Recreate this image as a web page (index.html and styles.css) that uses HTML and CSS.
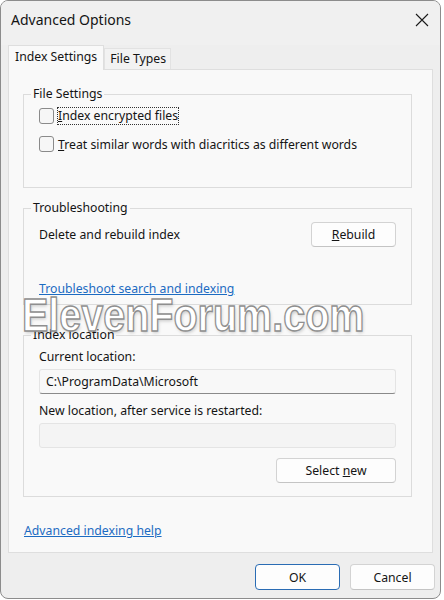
FILE: index.html
```html
<!DOCTYPE html>
<html lang="en">

<head>
    <meta charset="UTF-8">
    <meta name="viewport" content="width=device-width, initial-scale=1.0">
    <title>Advanced Options</title>
    <link rel="stylesheet" href="styles.css">
</head>

<body>

    <div class="window">

        <!-- Title bar -->
        <div class="titlebar">
            <span class="title">Advanced Options</span>
            <button class="close" aria-label="Close">
                <svg width="14" height="14" viewBox="0 0 14 14">
                    <path d="M1 1 L13 13 M13 1 L1 13" stroke="#1a1a1a" stroke-width="1.1" fill="none" />
                </svg>
            </button>
        </div>

        <!-- Tabs -->
        <div class="tabs">
            <div class="tab active">Index Settings</div>
            <div class="tab">File Types</div>
        </div>

        <div class="panel">
            <fieldset class="group group-files">
                <legend>File Settings</legend>
                <label class="check">
                    <span class="box"></span>
                    <span class="focus"><u>I</u>ndex encrypted files</span>
                </label>
                <label class="check">
                    <span class="box"></span>
                    <span><u>T</u>reat similar words with diacritics as different words</span>
                </label>
            </fieldset>

            <fieldset class="group group-trouble">
                <legend>Troubleshooting</legend>
                <div class="row">
                    <span>Delete and rebuild index</span>
                    <button class="btn btn-rebuild"><u>R</u>ebuild</button>
                </div>
                <a class="link link-trouble" href="#">Troubleshoot search and indexing</a>
            </fieldset>

            <fieldset class="group group-location">
                <legend>Index location</legend>
                <div class="field-label">Current location:</div>
                <div class="textbox">C:\ProgramData\Microsoft</div>
                <div class="field-label second">New location, after service is restarted:</div>
                <div class="textbox disabled"></div>
                <div class="row end">
                    <button class="btn btn-select">Select <u>n</u>ew</button>
                </div>
            </fieldset>

            <a class="link link-help" href="#">Advanced indexing help</a>
        </div>

        <!-- Dialog buttons -->
        <div class="footer">
            <button class="btn btn-dialog default">OK</button>
            <button class="btn btn-dialog">Cancel</button>
        </div>

        <div class="watermark">ElevenForum.com</div>
    </div>

</body>

</html>
```

FILE: styles.css
```css
body {
    margin: 0;
    background: #fff;
    font-family: "Noto Sans", "Open Sans", sans-serif;
    font-size: 12.25px;
    color: #141414;
}

.window {
    position: relative;
    box-sizing: border-box;
    width: 441px;
    height: 599px;
    border: 1px solid #8c8c8c;
    border-radius: 8px;
    background: #eeeeee;
    display: flex;
    flex-direction: column;
    overflow: hidden;
}

.titlebar {
    height: 44px;
    display: flex;
    align-items: flex-start;
    justify-content: space-between;
    background: #f0f0f0;
}

.title {
    font-size: 14px;
    margin: 9px 0 0 10px;
    line-height: 20px;
}

.close {
    border: none;
    background: none;
    padding: 0;
    margin: 12px 10px 0 0;
    width: 16px;
    height: 16px;
}

/* tabs */
.tabs {
    display: flex;
    align-items: flex-end;
    margin-left: 7px;
    height: 24px;
}

.tab {
    box-sizing: border-box;
    height: 21px;
    padding: 0 4px 0 5px;
    line-height: 20px;
    background: #f2f2f2;
    border: 1px solid #e2e2e2;
    border-bottom: none;
}

.tab.active {
    height: 25px;
    padding: 0 6px;
    line-height: 22px;
    background: #f9f9f9;
    border-color: #dedede;
    position: relative;
    z-index: 1;
    margin-bottom: -1px;
}

.panel {
    box-sizing: border-box;
    height: 484px;
    margin: 0 7px 0 7px;
    padding: 16px 20px 0 14px;
    background: #f9f9f9;
    border: 1px solid #dedede;
}

/* group boxes */
.group {
    margin: 0;
    border: 1px solid #dcdcdc;
    padding: 0 15px;
}

.group legend {
    line-height: 16px;
    padding: 0 2px;
    margin-left: -8px;
}

.group-files {
    padding-top: 3px;
    padding-bottom: 32px;
}

.group-trouble {
    margin-top: 12px;
    padding-top: 6px;
    padding-bottom: 6px;
}

.group-location {
    margin-top: 22px;
    padding-top: 5px;
    padding-bottom: 13px;
}

.check {
    display: flex;
    align-items: center;
    gap: 4px;
    height: 22px;
}

.check + .check {
    margin-top: 6px;
}

.box {
    box-sizing: border-box;
    width: 15px;
    height: 16px;
    border: 1px solid #8a8a8a;
    border-radius: 3px;
    background: #f6f6f6;
}

.focus {
    outline: 1px dotted #333;
    outline-offset: 0;
    line-height: 16px;
}

.row {
    display: flex;
    align-items: center;
    justify-content: space-between;
}

.row.end {
    justify-content: flex-end;
    margin-top: 10px;
}

.link {
    display: block;
    color: #1c6bc2;
    line-height: 18px;
}

.link-trouble {
    margin-top: 33px;
    width: max-content;
}

.link-help {
    margin: 25px 0 0 1px;
    width: max-content;
}

.field-label {
    line-height: 18px;
}

.field-label.second {
    margin-top: 8px;
}

.textbox {
    box-sizing: border-box;
    height: 25px;
    margin-top: 3px;
    padding: 0 6px;
    line-height: 23px;
    background: #f8f8f8;
    border: 1px solid #e4e4e4;
    border-bottom-color: #8a8a8a;
    border-radius: 3px;
}

.textbox.disabled {
    background: #f4f4f4;
    border-bottom-color: #e4e4e4;
}

/* buttons */
.btn {
    box-sizing: border-box;
    font: inherit;
    color: #141414;
    height: 25px;
    padding: 0;
    background: #fdfdfd;
    border: 1px solid #d3d3d3;
    border-bottom-color: #c4c4c4;
    border-radius: 4px;
}

.btn-rebuild {
    width: 85px;
}

.btn-select {
    width: 120px;
}

.footer {
    display: flex;
    justify-content: flex-end;
    gap: 10px;
    padding: 11px 5px 0 0;
}

.btn-dialog {
    width: 85px;
    height: 26px;
}

.btn-dialog.default {
    border-color: #2a6cb4;
}

/* site watermark laid over the dialog */
.watermark {
    position: absolute;
    left: 21px;
    top: 290px;
    font-family: "Liberation Sans", sans-serif;
    font-weight: bold;
    font-size: 39.5px;
    line-height: 40px;
    transform: scaleY(1.18);
    transform-origin: left top;
    color: #ffffff;
    -webkit-text-stroke: 1.2px #8f8f8f;
    text-shadow: 1px 2px 3px rgba(0, 0, 0, 0.18);
    pointer-events: none;
}
```
